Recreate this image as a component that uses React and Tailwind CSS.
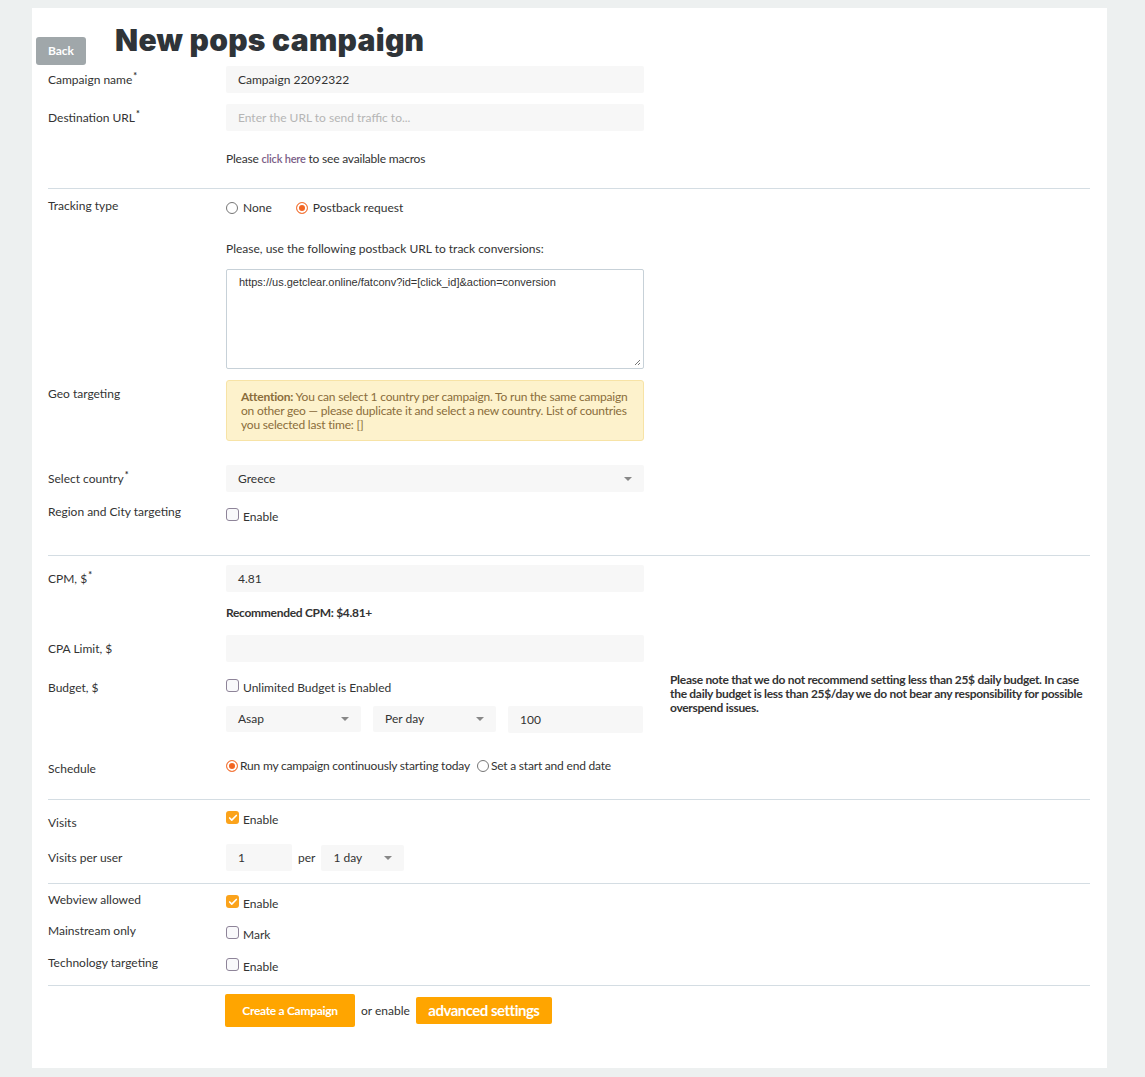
import { Check } from 'lucide-react';

const font = { fontFamily: 'Lato, "Noto Sans", sans-serif' };

function Label({ children, req, className = '' }) {
  return (
    <div className={`w-[178px] shrink-0 text-[12px] leading-4 text-[#333] ${className}`}>
      {children}{req && <sup className="ml-[1px] text-[9px] font-bold">*</sup>}
    </div>
  );
}

function Input({ value, placeholder, className = 'w-[418px]' }) {
  return (
    <div className={`h-[27px] bg-[#f7f7f7] rounded-[2px] flex items-center px-3 text-[12px] ${className}`}>
      {value ? <span className="text-[#333]">{value}</span> : <span className="text-[#b5b5b5]">{placeholder}</span>}
    </div>
  );
}

function Select({ value, className = 'w-[418px] h-[27px]' }) {
  return (
    <div className={`bg-[#f7f7f7] rounded-[2px] flex items-center justify-between pl-3 pr-[12px] text-[12px] text-[#333] ${className}`}>
      <span>{value}</span>
      <span className="block w-0 h-0 border-l-[4px] border-r-[4px] border-t-[4px] border-l-transparent border-r-transparent border-t-[#888]" />
    </div>
  );
}

function Box({ checked }) {
  return checked ? (
    <span className="w-[13px] h-[13px] rounded-[3px] bg-[#fba31b] flex items-center justify-center shrink-0">
      <Check size={10} strokeWidth={4} color="white" />
    </span>
  ) : (
    <span className="block w-[13px] h-[13px] rounded-[3px] border border-[#8e8499] bg-[#f9f9fb] shrink-0" />
  );
}

function Radio({ checked }) {
  return checked ? (
    <span className="block w-[12px] h-[12px] rounded-full border border-[#f47a3f] bg-[#f26522] ring-2 ring-inset ring-white shrink-0" />
  ) : (
    <span className="block w-[12px] h-[12px] rounded-full border border-[#767676] bg-white shrink-0" />
  );
}

function CheckRow({ checked, text }) {
  return (
    <div className="h-[20px] flex items-center gap-[4px] text-[12px] text-[#333]">
      <span className="block -mt-[3px]"><Box checked={checked} /></span>
      <span className="mt-[1px]">{text}</span>
    </div>
  );
}

function Divider({ className = '' }) {
  return <div className={`border-t border-[#d4dde3] ${className}`} />;
}

export default function App() {
  return (
    <div className="min-h-[1077px] bg-[#edf0f0] pt-[8px] pb-[9px]" style={font}>
      <div className="ml-[32px] w-[1075px] bg-white h-[1060px] px-[16px] pr-[17px]">
        {/* Header */}
        <div className="h-[58px] flex items-start">
          <button className="-ml-[12px] mt-[29px] w-[50px] h-[28px] rounded-[3px] bg-[#a0a7aa] text-white text-[12px] font-bold">Back</button>
          <h1 className="ml-[29px] mt-[14px] text-[30px] leading-[36px] font-black tracking-[0.3px] text-[#2f3438]" style={{ fontFamily: 'Inter, sans-serif' }}>New pops campaign</h1>
        </div>

        <div className="flex items-center">
          <Label req>Campaign name</Label>
          <Input value="Campaign 22092322" />
        </div>
        <div className="flex items-center mt-[11px]">
          <Label req>Destination URL</Label>
          <Input placeholder="Enter the URL to send traffic to..." />
        </div>
        <div className="flex mt-[20px]">
          <Label />
          <div className="text-[12px] leading-4 text-[#333] tracking-[-0.2px]">Please <span className="text-[#7b5e86] text-[11px] font-semibold">click here</span> to see available macros</div>
        </div>

        <Divider className="mt-[21px]" />

        <div className="flex items-start mt-[9px]">
          <Label>Tracking type</Label>
          <div className="flex flex-col">
            <div className="h-[20px] flex items-center text-[12px] text-[#333]">
              <Radio />
              <span className="ml-[5px]">None</span>
              <span className="block ml-[24px]"><Radio checked /></span>
              <span className="ml-[5px]">Postback request</span>
            </div>
            <div className="mt-[23px] text-[12px] leading-4 text-[#333]">Please, use the following postback URL to track conversions:</div>
            <div className="relative mt-[12px] w-[418px] h-[100px] border border-[#c7d1d8] rounded-[2px] px-3 py-[4px] text-[11px] text-[#333]" style={{ fontFamily: '"Liberation Sans", Arial, sans-serif' }}>
              https://us.getclear.online/fatconv?id=[click_id]&action=conversion
              <svg className="absolute right-[2px] bottom-[2px]" width="8" height="8" viewBox="0 0 8 8">
                <path d="M7 2 L2 7 M7 5 L5 7" stroke="#777" strokeWidth="1" />
              </svg>
            </div>
          </div>
        </div>

        <div className="flex items-start mt-[11px]">
          <Label className="pt-[6px]">Geo targeting</Label>
          <div className="w-[418px] bg-[#fdf2cc] border border-[#f7e3a6] rounded-[3px] pl-[14px] pr-[6px] pt-[9px] pb-[8px] text-[12px] leading-[14px] tracking-[-0.2px] text-[#8a6d3b]">
            <b>Attention:</b> You can select 1 country per campaign. To run the same campaign on other geo — please duplicate it and select a new country. List of countries you selected last time: []
          </div>
        </div>

        <div className="flex items-center mt-[24px]">
          <Label req>Select country</Label>
          <Select value="Greece" />
        </div>
        <div className="flex items-start mt-[12px]">
          <Label>Region and City targeting</Label>
          <div className="mt-[2px]"><CheckRow text="Enable" /></div>
        </div>

        <Divider className="mt-[29px]" />

        <div className="flex items-center mt-[9px]">
          <Label req>CPM, $</Label>
          <Input value="4.81" />
        </div>
        <div className="flex mt-[13px]">
          <Label />
          <div className="text-[12px] leading-4 font-bold text-[#333] tracking-[-0.3px]">Recommended CPM: $4.81+</div>
        </div>
        <div className="flex items-center mt-[14px]">
          <Label>CPA Limit, $</Label>
          <Input />
        </div>

        <div className="flex items-start mt-[12px]">
          <Label className="pt-[6px]">Budget, $</Label>
          <div className="flex flex-col w-[418px]">
            <div className="mt-[3px]"><CheckRow text="Unlimited Budget is Enabled" /></div>
            <div className="flex mt-[9px] gap-[12px]">
              <Select value="Asap" className="w-[135px] h-[26px]" />
              <Select value="Per day" className="w-[123px] h-[26px]" />
              <Input value="100" className="w-[135px] h-[26px]" />
            </div>
          </div>
          <div className="ml-[26px] mt-[-1px] w-[420px] text-[12px] leading-[14px] font-bold text-[#333] tracking-[-0.3px]">
            Please note that we do not recommend setting less than 25$ daily budget. In case the daily budget is less than 25$/day we do not bear any responsibility for possible overspend issues.
          </div>
        </div>

        <div className="flex items-start mt-[23px]">
          <Label className="pt-[5px]">Schedule</Label>
          <div className="h-[20px] flex items-center text-[12px] text-[#333] tracking-[-0.2px]">
            <Radio checked />
            <span className="ml-[2px]">Run my campaign continuously starting today</span>
            <span className="block ml-[7px]"><Radio /></span>
            <span className="ml-[2px]">Set a start and end date</span>
          </div>
        </div>

        <Divider className="mt-[22px]" />

        <div className="flex items-start mt-[9px]">
          <Label className="pt-[6px]">Visits</Label>
          <CheckRow checked text="Enable" />
        </div>
        <div className="flex items-center mt-[13px]">
          <Label>Visits per user</Label>
          <Input value="1" className="w-[66px] h-[26px]" />
          <span className="ml-[6px] text-[12px] text-[#333]">per</span>
          <Select value="1 day" className="ml-[6px] w-[83px] h-[26px]" />
        </div>

        <Divider className="mt-[12px]" />

        <div className="flex items-start mt-[8px]">
          <Label>Webview allowed</Label>
          <div className="mt-[1px]"><CheckRow checked text="Enable" /></div>
        </div>
        <div className="flex items-start mt-[10px]">
          <Label>Mainstream only</Label>
          <div className="mt-[1px]"><CheckRow text="Mark" /></div>
        </div>
        <div className="flex items-start mt-[11px]">
          <Label>Technology targeting</Label>
          <div className="mt-[1px]"><CheckRow text="Enable" /></div>
        </div>

        <Divider className="mt-[9px]" />

        <div className="flex items-center mt-[8px]">
          <Label />
          <button className="w-[130px] h-[33px] rounded-[2px] bg-[#ffa500] text-white text-[12px] font-bold -ml-[1px] tracking-[-0.3px]">Create a Campaign</button>
          <span className="ml-[6px] text-[12px] text-[#333]">or enable</span>
          <button className="ml-[6px] w-[136px] h-[27px] rounded-[2px] bg-[#ffa500] text-white text-[15px] font-bold tracking-[-0.5px]">advanced settings</button>
        </div>
      </div>
    </div>
  );
}
